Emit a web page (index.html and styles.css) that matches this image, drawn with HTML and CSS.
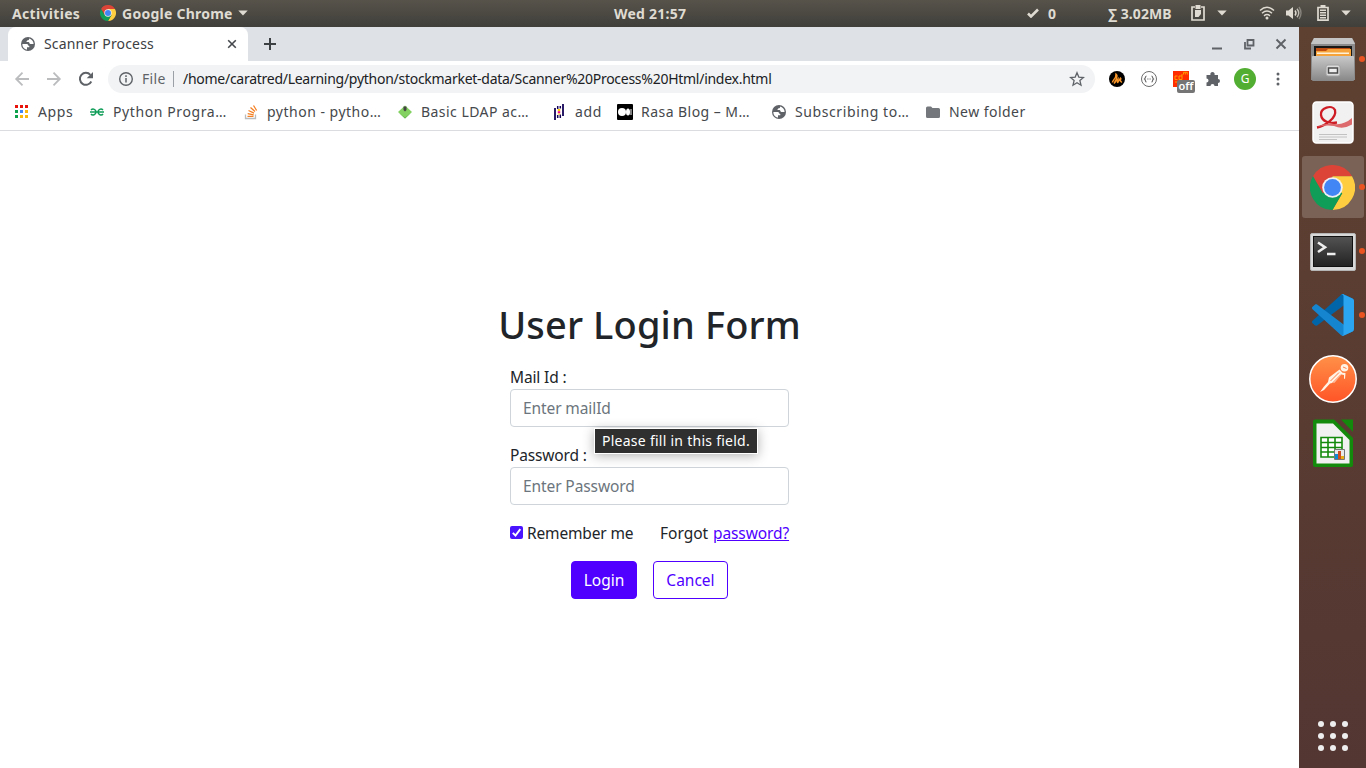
FILE: index.html
```html
<!DOCTYPE html>
<html lang="en">
<head>
<meta charset="utf-8">
<title>Scanner Process</title>
<link rel="stylesheet" href="styles.css">
</head>
<body>
<svg class="defs" aria-hidden="true">
  <symbol id="chrome" viewBox="0 0 48 48">
    <path fill="#db4437" d="M3.2 12A24 24 0 0 1 44.8 12H24V24L13.6 30Z"/>
    <path fill="#ffcd40" d="M44.8 12A24 24 0 0 1 24 48L34.4 30 24 24V12Z"/>
    <path fill="#0f9d58" d="M24 48A24 24 0 0 1 3.2 12L13.6 30 24 24 34.4 30Z"/>
    <circle cx="24" cy="24" r="11" fill="#f1f1f1"/>
    <circle cx="24" cy="24" r="9" fill="#4285f4"/>
  </symbol>
  <symbol id="globe" viewBox="0 0 16 16">
    <circle cx="8" cy="8" r="7" fill="#5f6368"/>
    <path fill="#fff" d="M2.4 8H7c1 0 1 2 2.300 2v1.300H7v2.300C4.500 13.500 2.200 11 2.400 8ZM9 2.500v1C9 4.500 6.500 4 6.500 6H8.500C9.500 6 9.200 8 10.500 8h3.100c0-2.600-1.900-5-4.600-5.500Z"/>
  </symbol>
  <symbol id="caret" viewBox="0 0 10 6"><path fill="#dfdbd2" d="M.3.500h9.400L5 5.500Z"/></symbol>
</svg>

<header class="topbar">
  <span class="t activities">Activities</span>
  <svg class="app-icon"><use href="#chrome"/></svg>
  <span class="t app-name">Google Chrome</span>
  <svg class="caret c1"><use href="#caret"/></svg>
  <span class="t clock">Wed 21:57</span>
  <div class="tray">
    <svg class="tick" viewBox="0 0 12 10"><path d="M1 5.500 4 8.500 11 1.500" fill="none" stroke="#dfdbd2" stroke-width="2.600"/></svg>
    <span class="t zero">0</span>
    <span class="t net">∑ 3.02MB</span>
    <svg class="clip" viewBox="0 0 14 16"><path fill="none" stroke="#dfdbd2" stroke-width="1.700" d="M4 2H1v13h12V2h-3"/><path fill="#dfdbd2" d="M4.500 0h5v4h-5zM4 5h6v4L7.500 12H4z"/></svg>
    <svg class="caret c2"><use href="#caret"/></svg>
    <svg class="wifi" viewBox="0 0 16 14"><g fill="none" stroke="#dfdbd2" stroke-width="1.500"><path d="M1 4.500Q8-2 15 4.500M3 7.200q5-4.400 10 0M5 9.800q3-2.400 6 0"/></g><circle cx="8" cy="12" r="1.500" fill="#dfdbd2"/></svg>
    <svg class="vol" viewBox="0 0 16 14"><path fill="#dfdbd2" d="M0 4.500h2.500L7 1v12L2.500 9.500H0z"/><g fill="none" stroke="#dfdbd2" stroke-width="1.400"><path d="M9 4.500q2 2.500 0 5"/><path d="M11 2.700q3.500 4.300 0 8.600" opacity=".8"/><path d="M13 1q4 6 0 12" opacity=".4"/></g></svg>
    <svg class="bat" viewBox="0 0 12 16"><path fill="none" stroke="#dfdbd2" stroke-width="1.700" d="M1 2.500h10v12.700H1z"/><path fill="#dfdbd2" d="M3.500 0h5v2h-5zM3 4.500h6V6H3zM3 7h6v1.500H3zM3 9.500h6V11H3zM3 12h6v1.500H3z"/></svg>
    <svg class="caret c3"><use href="#caret"/></svg>
  </div>
</header>

<div class="desktop">
  <main class="window">
    <div class="tabstrip">
      <div class="tab">
        <svg class="i16"><use href="#globe"/></svg>
        <span class="t tab-title">Scanner Process</span>
        <svg class="tab-x" viewBox="0 0 10 10"><path d="m1.200 1.200 7.600 7.600m0-7.600L1.200 8.800" stroke="#45484c" stroke-width="1.600"/></svg>
      </div>
      <svg class="plus" viewBox="0 0 12 12"><path d="M6 0v12M0 6h12" stroke="#3c4043" stroke-width="2"/></svg>
      <div class="controls">
        <svg viewBox="0 0 12 12"><path d="M1 10.500h10" stroke="#5f6368" stroke-width="2"/></svg>
        <svg viewBox="0 0 12 12"><path d="M4.500 2h6v5.500h-6zM2 4v6.500h6" fill="none" stroke="#5f6368" stroke-width="1.800"/></svg>
        <svg viewBox="0 0 12 12"><path d="m1.500 1.500 9 9m0-9-9 9" stroke="#5f6368" stroke-width="1.900"/></svg>
      </div>
    </div>

    <div class="toolbar">
      <svg class="nav" viewBox="0 0 16 16"><path d="M15 8H2m6.500-6.300L2.200 8l6.300 6.300" fill="none" stroke="#babcbe" stroke-width="1.800"/></svg>
      <svg class="nav" viewBox="0 0 16 16"><path d="M1 8h13M7.500 1.700 13.800 8l-6.300 6.300" fill="none" stroke="#babcbe" stroke-width="1.800"/></svg>
      <svg class="nav" viewBox="0 0 16 16"><path d="M13.300 10.500A6 6 0 1 1 12.400 3.800" fill="none" stroke="#5f6368" stroke-width="2"/><path fill="#5f6368" d="M15 1v6.300H8.700z"/></svg>
      <div class="omnibox">
        <svg class="info" viewBox="0 0 14 14"><circle cx="7" cy="7" r="6.300" fill="none" stroke="#5f6368" stroke-width="1.400"/><path d="M7 6v4.500M7 3.300v1.600" stroke="#5f6368" stroke-width="1.500"/></svg>
        <span class="t scheme">File</span>
        <span class="t url">/home/caratred/Learning/python/stockmarket-data/Scanner%20Process%20Html/index.html</span>
        <svg class="star" viewBox="0 0 16 16"><path d="m8 1.800 1.800 4.300 4.700.4-3.600 3.100 1.100 4.600L8 11.700l-4 2.500 1.100-4.600L1.500 6.500l4.700-.4z" fill="none" stroke="#5f6368" stroke-width="1.300"/></svg>
      </div>
      <svg class="ext" viewBox="0 0 16 16"><circle cx="8" cy="8" r="8"/><path d="M3.500 11.500C3 9.500 7.500 8 7 3c2 1.200 1 3 0 5.500L5 12.500 9 8l-.5 4 3-5c1.500 1-1.500 2.500.5 3.500l.8 1" fill="none" stroke="#f79428" stroke-width="1.400"/></svg>
      <svg class="ext" viewBox="0 0 16 16"><circle cx="8" cy="8" r="7.500" fill="#fff" stroke="#6d6d6d"/><path d="M5.500 5C4 5 5 7 3.500 8 5 9 4 11 5.500 11M10.500 5C12 5 11 7 12.500 8 11 9 12 11 10.500 11M6.300 8h.8m.5 0h.8m.5 0h.8" fill="none" stroke="#666" stroke-width="1.100"/></svg>
      <div class="ext cdn">
        <svg viewBox="0 0 16 16"><path fill="#ff2d00" d="M0 0h16v16H0z"/><path d="M4.500 5H2v3.500h2.500M9 3v5.500H6V5h3M10.500 3.500V1.300h1.800v2.200m0-2.200h2v2.200M2 11h3v3M7 11h2" fill="none" stroke="#ff9d00"/></svg>
        <span class="off">off</span>
      </div>
      <svg class="ext" viewBox="0 0 16 16"><path fill="#5f6368" d="M1.500 4h4a2.200 2.200 0 1 1 4 0H13v4a2 2 0 1 1 0 4v3H9.500a2 2 0 1 0-4 0h-4v-3.500a2 2 0 1 0 0-4z"/></svg>
      <span class="avatar">G</span>
      <svg class="menu" viewBox="0 0 4 14"><g fill="#5f6368"><circle cx="2" cy="2" r="1.500"/><circle cx="2" cy="7" r="1.500"/><circle cx="2" cy="12" r="1.500"/></g></svg>
    </div>

    <nav class="bookmarks">
      <a class="bm b1"><svg viewBox="0 0 16 16"><path fill="#e8140c" d="M1 1h3v3H1zM6 1h3v3H6zM11 1h3v3h-3z"/><path fill="#0ca14a" d="M1 6h3v3H1zM1 11h3v3H1z"/><path fill="#4285f4" d="M6 6h3v3H6z"/><path fill="#fbb80b" d="M11 6h3v3h-3zM6 11h3v3H6zM11 11h3v3h-3z"/></svg><span class="t">Apps</span></a>
      <a class="bm b2"><svg viewBox="0 0 16 16"><path d="M2 6C4 4 7 5.500 7 8s-3.500 4-5 2M1 8h14M14 6C12 4 9 5.500 9 8s3.500 4 5 2" fill="none" stroke="#0f9d58" stroke-width="1.500"/></svg><span class="t">Python Progra…</span></a>
      <a class="bm b3"><svg viewBox="0 0 16 16"><path d="M2.500 10.500v4h10v-4" fill="none" stroke="#bcbbbb" stroke-width="1.300"/><path d="M4.500 12.300h6M4.700 9.700l6 1.200M5.500 6.500l5.500 2.600M7.500 3.500l4.500 4M10.500 1.500l3.200 5" stroke="#f48024" stroke-width="1.300"/></svg><span class="t">python - pytho…</span></a>
      <a class="bm b4"><svg viewBox="0 0 16 16"><path fill="#83d160" d="m8 1.500 7 6.500-7 6.500L1 8z"/><path fill="#5fb34a" d="m2 9 6 4.500L14 9l-6 5.500z"/><path fill="#444" d="M6.500 2.500h3V6L8 7.500 6.500 6z"/></svg><span class="t">Basic LDAP ac…</span></a>
      <a class="bm b5"><svg viewBox="0 0 16 16"><path d="M4 4v12M12 0v12" stroke="#150458" stroke-width="1.800"/><path d="M6.700 2v3M6.700 11v3M9.300 2v2.500M9.300 10.500v3.500" stroke="#150458" stroke-width="1.500"/><path d="M8 5v2M8 9.500v1" stroke="#ffca00" stroke-width="2.500"/><path d="M8 7.200v2" stroke="#e70488" stroke-width="2.500"/></svg><span class="t">add</span></a>
      <a class="bm b6"><svg viewBox="0 0 16 16"><rect width="16" height="16" rx="1"/><circle cx="5" cy="8" r="4" fill="#fff"/><ellipse cx="11" cy="8" rx="2" ry="3.500" fill="#fff"/><path d="M14 5v6" stroke="#fff"/></svg><span class="t">Rasa Blog – M…</span></a>
      <a class="bm b7"><svg><use href="#globe"/></svg><span class="t">Subscribing to…</span></a>
      <a class="bm b8"><svg viewBox="0 0 16 16"><path fill="#74777b" d="M1 4q0-1.500 1.500-1.500H6L7.500 4h6Q15 4 15 5.500v7q0 1.500-1.500 1.500h-11Q1 14 1 12.500z"/></svg><span class="t">New folder</span></a>
    </nav>

    <section class="page">
      <h1>User Login Form</h1>
      <form class="login">
        <div class="field">
          <label for="mail">Mail Id :</label>
          <input class="control" id="mail" type="text" placeholder="Enter mailId">
          <div class="tooltip">Please fill in this field.</div>
        </div>
        <div class="field">
          <label for="pass">Password :</label>
          <input class="control pw" id="pass" type="text" placeholder="Enter Password">
        </div>
        <div class="options">
          <svg class="check" viewBox="0 0 13 13"><rect width="13" height="13" rx="2" fill="#4b14ff"/><path d="m2.800 6.800 2.700 2.700 4.800-6.400" fill="none" stroke="#fff" stroke-width="1.900"/></svg>
          <span class="t remember">Remember me</span>
          <span class="t forgot">Forgot</span>
          <a class="t link">password?</a>
        </div>
        <div class="buttons">
          <button type="button" class="btn primary">Login</button>
          <button type="button" class="btn outline">Cancel</button>
        </div>
      </form>
    </section>
  </main>

  <aside class="dock">
    <div class="item run files"><svg viewBox="0 0 48 48"><defs><linearGradient id="m" x2="0" y2="1"><stop stop-color="#c9c9c9"/><stop offset="1" stop-color="#878787"/></linearGradient></defs><path fill="#8b8b8b" d="M5 4h38l3 5v37H2V9z"/><path fill="#c4c4c4" d="M5 4h38l3 6H2z"/><path fill="#1b1917" d="M5 12h38v11H5z"/><path fill="#bf4c11" d="M7 14h34v9H7z"/><path fill="#f6a33c" d="M7 17h10l2-2h23v8H7z"/><path fill="#fff0d8" d="M8 18.500h32V20H8z"/><rect x="3" y="22" width="42" height="25" rx="1" fill="url(#m)"/><rect x="17" y="31" width="14" height="11" rx="2" fill="#dcdcdc" stroke="#a2a2a2"/><rect x="19.500" y="34" width="9" height="5" fill="#eee" stroke="#4b4b4b" stroke-width="1.500"/></svg></div>
    <div class="item"><svg viewBox="0 0 48 48"><rect x="4" y="3" width="40" height="41" rx="3.500" fill="#f1f1f1" stroke="#fff" stroke-width="1.500"/><path d="M8 28.500C16 27 28 19 26 11c-3-6-15-2-14 5 1 7 9 8.500 16 7.500" fill="none" stroke="#cf1d25" stroke-width="2.300"/><path fill="#dd6a6c" d="M8 28q8-4.500 18-3 9 1 17-6v6.500q-9 5.500-18 1.500-8-1.500-17 1"/><path d="M10 35.500h28M10 38h28M10 40.500h18" stroke="#c2c2c2"/></svg></div>
    <div class="item run active"><svg class="dock-chrome"><use href="#chrome"/></svg></div>
    <div class="item run"><svg viewBox="0 0 48 48"><defs><linearGradient id="g" x2="0" y2="1"><stop stop-color="#535353"/><stop offset="1" stop-color="#222"/></linearGradient></defs><rect x="1.500" y="6.500" width="45" height="37" rx="1.500" fill="#d8d8d8" stroke="#b5b5b5"/><rect x="4.500" y="9.500" width="39" height="30" fill="url(#g)" stroke="#111"/><path d="m9 15.500 7 4.700L9 25M18 27h8.500" fill="none" stroke="#eee" stroke-width="2.600"/></svg></div>
    <div class="item run"><svg class="code" viewBox="0 0 100 100"><path fill="#0065a9" d="M96.500 10.800 75.900.9C73.500-.3 70.600.2 68.700 2.100L1.300 63.600c-1.800 1.600-1.800 4.500 0 6.100l5.500 5c1.500 1.400 3.700 1.500 5.300.3L93.400 13.400c2.700-2.100 6.600-.1 6.600 3.300v-.3c0-2.400-1.400-4.600-3.500-5.600z"/><path fill="#1685d0" d="m96.500 89.200-20.600 9.900c-2.400 1.200-5.300.7-7.200-1.200L1.300 36.400c-1.800-1.600-1.800-4.500 0-6.100l5.500-5c1.500-1.400 3.700-1.500 5.300-.3l81.300 61.600c2.700 2.100 6.600.1 6.600-3.300v.3c0 2.400-1.400 4.600-3.500 5.600z"/><path fill="#2ba5f0" d="M75.900 99.100c-2.400 1.200-5.300.7-7.200-1.200 2.300 2.300 6.300.7 6.300-2.600V4.700c0-3.300-4-4.900-6.300-2.600C70.600.2 73.500-.3 75.900.9l20.600 9.900c2.100 1 3.500 3.200 3.500 5.600v67.200c0 2.400-1.400 4.600-3.500 5.600z"/></svg></div>
    <div class="item"><svg viewBox="0 0 48 48"><defs><linearGradient id="p" x2="0" y2="1"><stop stop-color="#ff9148"/><stop offset="1" stop-color="#ff5427"/></linearGradient></defs><circle cx="24" cy="24" r="23.200" fill="url(#p)" stroke="#fff" stroke-width="1.500"/><circle cx="35.500" cy="12.800" r="3.800" fill="#fff3e6"/><path fill="#fff3e6" d="m30.500 14.500 3 3.200 3 .3-.5 6-1-.500v-3.500l-2.500-.5-7 8-4.500 1-6 6.500-4 2 4-5.500 4-4.500 1-4.500z"/><path d="m30 17.500-8.500 8.500m10.500-6.500-9 9M34 12l3.500 1.500" stroke="#ff7038" stroke-width=".9"/></svg></div>
    <div class="item"><svg viewBox="0 0 48 48"><path fill="#148a0c" d="M4 2.500q0-2 2-2h19L44 19v27q0 2-2 2H6q-2 0-2-2z"/><path fill="#148a0c" d="M32 .500h12V13z"/><path fill="#f1f1f1" d="M7.500 4.500H24L40.500 21v23.500h-33z"/><path fill="#fff" stroke="#148a0c" stroke-width="1.600" d="M12 18.500h21V38H12zM12 23.500h21M12 28.500h21M12 33h21M19 18.500V38M26 18.500V38"/><path fill="#e9e9e9" stroke="#777" d="M25.500 30.500h10v10h-10z"/><path fill="#0d88d3" d="M26 35h3v5h-3z"/><path fill="#cd4d20" d="M29 32h3v8h-3z"/><path fill="#ecae15" d="M32 37h3v3h-3z"/></svg></div>
    <svg class="grid" viewBox="0 0 32 32"><g fill="#eee"><circle cx="4" cy="4" r="3"/><circle cx="16" cy="4" r="3"/><circle cx="28" cy="4" r="3"/><circle cx="4" cy="16" r="3"/><circle cx="16" cy="16" r="3"/><circle cx="28" cy="16" r="3"/><circle cx="4" cy="28" r="3"/><circle cx="16" cy="28" r="3"/><circle cx="28" cy="28" r="3"/></g></svg>
  </aside>
</div>
</body>
</html>
```
FILE: styles.css
```css
* { box-sizing: border-box; }
body { margin: 0; width: 1366px; height: 768px; overflow: hidden; font-family: "Noto Sans", "Open Sans", sans-serif; font-size: 14px; color: #212529; }
svg { display: block; flex: none; }
.t { white-space: nowrap; flex: none; }
.defs { position: absolute; width: 0; height: 0; }

.topbar { display: flex; align-items: center; height: 27px; padding: 0 0 1px 12px; background: linear-gradient(#57534b, #403f3a); color: #dfdbd2; font-weight: 700; }
.activities { width: 88px; letter-spacing: .32px; }
.app-icon { width: 16px; height: 16px; margin-right: 6px; }
.app-name { width: 116px; letter-spacing: .25px; }
.caret { width: 10px; height: 6px; }
.clock { margin-left: 366px; width: 413px; letter-spacing: .25px; }
.tray { display: flex; align-items: center; }
.tick { width: 12px; height: 10px; }
.zero { width: 60px; margin-left: 9px; }
.net { width: 84px; letter-spacing: .1px; }
.clip { width: 14px; height: 16px; margin-left: -1px; }
.c2 { margin-left: 12px; }
.wifi { width: 16px; height: 14px; margin-left: 32px; }
.vol { width: 16px; height: 14px; margin-left: 11px; }
.bat { width: 12px; height: 16px; margin-left: 15px; }
.c3 { margin-left: 12px; }

.desktop { display: flex; height: 741px; }
.window { width: 1299px; background: #fff; }
.tabstrip { display: flex; align-items: center; height: 34px; padding-left: 8px; background: #dee1e6; }
.tab { display: flex; align-items: center; width: 240px; height: 34px; padding-left: 12px; background: #fff; border-radius: 8px 8px 0 0; color: #3c4043; }
.i16 { width: 16px; height: 16px; margin-right: 8px; }
.tab-title { width: 183px; padding-bottom: 2px; letter-spacing: .17px; }
.tab-x { width: 10px; height: 10px; }
.plus { width: 12px; height: 12px; margin-left: 16px; }
.controls { display: flex; gap: 20px; margin-left: auto; padding-right: 12px; }
.controls svg { width: 12px; height: 12px; }

.toolbar { display: flex; align-items: center; height: 36px; padding-left: 14px; }
.nav { width: 16px; height: 16px; margin-right: 16px; }
.omnibox { display: flex; align-items: center; width: 987px; height: 28px; margin-left: -2px; padding-left: 11px; border-radius: 14px; background: #f1f3f4; }
.info { width: 14px; height: 14px; margin-right: 9px; }
.scheme { width: 32px; height: 16px; line-height: 15px; border-right: 1px solid #9aa0a6; color: #5f6368; letter-spacing: .3px; }
.url { width: 895px; padding: 0 0 2px 9px; color: #202124; letter-spacing: -.27px; }
.star { width: 16px; height: 16px; }
.ext { width: 16px; height: 16px; margin-left: 16px; }
.omnibox + .ext { margin-left: 14px; }
.cdn { position: relative; flex: none; }
.off { position: absolute; left: 4px; top: 9px; width: 18px; height: 13px; border-radius: 2px; background: #757575; color: #fff; font-size: 11px; line-height: 12px; font-weight: 600; text-align: center; }
.avatar { flex: none; width: 22px; height: 22px; margin-left: 13px; border-radius: 50%; background: #52ae32; color: #fff; font-size: 12px; line-height: 22px; text-align: center; }
.menu { width: 4px; height: 14px; margin-left: 20px; }

.bookmarks { display: flex; align-items: center; height: 34px; padding: 0 0 3px 14px; border-bottom: 1px solid #dadce0; color: #45484c; }
.bm { display: flex; align-items: center; flex: none; gap: 8px; }
.bm svg { width: 16px; height: 16px; }
.bm .t { padding-bottom: 2px; letter-spacing: .6px; }
.b1 { width: 75px; }
.b2 { width: 154px; }
.b3 { width: 154px; }
.b3 .t { letter-spacing: .5px; }
.b4 { width: 154px; }
.bm.b4 .t, .bm.b6 .t, .bm.b8 .t { letter-spacing: .46px; }
.b5 { width: 66px; }
.b6 { width: 154px; }
.b7 { width: 154px; }

.page { padding-top: 169px; font-size: 15.5px; }
h1 { margin: 0 0 17px; height: 48px; line-height: 48px; font-size: 38px; font-weight: 500; text-align: center; letter-spacing: .13px; }
.login { width: 279px; margin: 0 auto; }
.field { position: relative; margin-bottom: 16px; }
label { display: block; height: 24px; line-height: 24px; letter-spacing: -.15px; }
.control { display: block; width: 279px; height: 38px; padding: 0 12px; border: 1px solid #ced4da; border-radius: 4px; font: inherit; letter-spacing: -.1px; }
.control::placeholder { color: #6c757d; opacity: 1; }
.tooltip { position: absolute; z-index: 1; left: 84px; top: 63px; width: 164px; height: 26px; padding: 0 7px; border: 1px solid #fff; background: #2f2f2f; color: #fff; font-size: 14px; line-height: 24px; letter-spacing: .26px; white-space: nowrap; box-shadow: 0 2px 12px rgba(0,0,0,.3); }
.options { display: flex; align-items: center; height: 24px; line-height: 24px; }
.check { width: 13px; height: 13px; margin: 0 4px 2px 0; }
.remember { width: 133px; letter-spacing: -.15px; }
.forgot { width: 53px; }
.link { color: #5000ff; text-decoration: underline; letter-spacing: -.1px; }
.buttons { display: flex; justify-content: center; gap: 16px; margin-top: 16px; }
.btn { width: 66px; height: 38px; padding: 0; border: 1px solid #5000ff; border-radius: 4px; font: inherit; }
.primary { background: #5000ff; color: #fff; }
.outline { width: 75px; background: #fff; color: #5000ff; }

.dock { display: flex; flex-direction: column; align-items: center; gap: 2px; width: 67px; padding-top: 1px; background: linear-gradient(#5f4131, #533632); }
.item { position: relative; display: flex; align-items: center; justify-content: center; flex: none; width: 62px; height: 62px; border-radius: 3px; }
.item svg { width: 48px; height: 48px; }
.files { padding-bottom: 3px; }
.item .dock-chrome { width: 45px; height: 45px; }
.item .code { width: 42px; height: 42px; }
.active { background: #7b6256; }
.run::after { content: ""; position: absolute; right: -1px; top: 28px; width: 6px; height: 6px; border-radius: 50%; background: #e95420; }
.grid { width: 32px; height: 32px; margin-top: auto; margin-bottom: 16px; }
```
